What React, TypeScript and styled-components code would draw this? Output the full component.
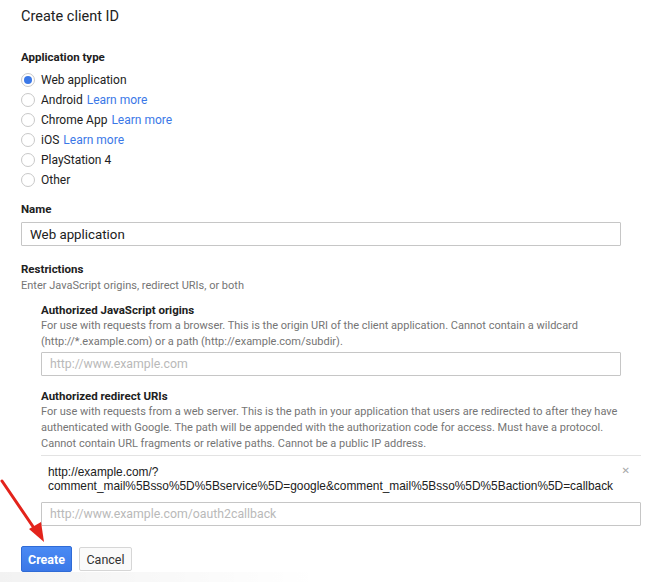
import React from "react";
import styled, { createGlobalStyle } from "styled-components";

const Global = createGlobalStyle`
  html, body { margin: 0; padding: 0; background: #fff; }
  body { font-family: Roboto, "Noto Sans", Arial, sans-serif; color: #212121; }
  * { box-sizing: border-box; }
`;

const Page = styled.div`
  position: relative;
  width: 659px;
  height: 582px;
  overflow: hidden;
  padding: 5px 0 0 21px;
`;

const Title = styled.h1`
  margin: 0;
  font-size: 14.5px;
  font-weight: 400;
  line-height: 24px;
  color: #212121;
`;

const Label = styled.div<{ $mt: number }>`
  margin-top: ${(p) => p.$mt}px;
  font-size: 11.5px;
  font-weight: 700;
  line-height: 15px;
  color: #212121;
`;

const RadioList = styled.div`
  margin-top: 5px;
  display: flex;
  flex-direction: column;
`;

const RadioRow = styled.label`
  display: flex;
  align-items: center;
  height: 20px;
  font-size: 12px;
  color: #212121;
`;

const Circle = styled.span<{ $on?: boolean }>`
  width: 14px;
  height: 14px;
  border-radius: 50%;
  border: 1px solid #c8c8c8;
  background: #fff;
  margin-right: 6px;
  display: flex;
  align-items: center;
  justify-content: center;
  &::after {
    content: "";
    width: 8px;
    height: 8px;
    border-radius: 50%;
    background: ${(p) => (p.$on ? "#3b78e7" : "transparent")};
  }
`;

const Link = styled.a`
  color: #3b78e7;
  text-decoration: none;
  margin-left: 4px;
`;

const Input = styled.div<{ $w: number; $ph?: boolean; $mt: number }>`
  width: ${(p) => p.$w}px;
  height: 24px;
  margin-top: ${(p) => p.$mt}px;
  border: 1px solid #c6c6c6;
  border-radius: 1px;
  padding-left: 8px;
  display: flex;
  align-items: center;
  font-size: ${(p) => (p.$ph ? 12.3 : 13.3)}px;
  color: ${(p) => (p.$ph ? "#b9b9b9" : "#212121")};
`;

const Hint = styled.div<{ $mt?: number }>`
  margin-top: ${(p) => p.$mt ?? 0}px;
  font-size: 11px;
  line-height: 16px;
  color: #757575;
`;

const Indent = styled.div`
  margin-left: 20px;
  width: 600px;
`;

const Divider = styled.div`
  margin-top: 3px;
  height: 1px;
  background: #e3e3e3;
`;

const UriRow = styled.div`
  position: relative;
  padding: 9px 28px 0 7px;
  font-family: "Liberation Sans", Arial, sans-serif;
  font-size: 11.9px;
  line-height: 14px;
  color: #212121;
  white-space: nowrap;
`;

const Remove = styled.span`
  position: absolute;
  right: 11px;
  top: 8px;
  font-family: "DejaVu Sans", sans-serif;
  font-size: 10px;
  line-height: 14px;
  color: #a8a8a8;
`;

const Buttons = styled.div`
  margin-top: 20px;
  display: flex;
  align-items: center;
  gap: 7px;
`;

const Button = styled.button<{ $primary?: boolean }>`
  height: ${(p) => (p.$primary ? 26 : 24)}px;
  width: ${(p) => (p.$primary ? 51 : 53)}px;
  padding: 0;
  border-radius: 2px;
  font-family: Roboto, Arial, sans-serif;
  font-size: 12.5px;
  font-weight: ${(p) => (p.$primary ? 700 : 400)};
  color: ${(p) => (p.$primary ? "#fff" : "#333")};
  border: 1px solid ${(p) => (p.$primary ? "#2f6bd6" : "#d6d6d6")};
  background: ${(p) =>
    p.$primary ? "linear-gradient(#4a8af4, #3b78e7)" : "#fafafa"};
`;

const BottomShade = styled.div`
  position: absolute;
  left: 0;
  bottom: 0;
  width: 320px;
  height: 10px;
  background: linear-gradient(to right, rgba(0,0,0,0.05), rgba(0,0,0,0));
`;

const Arrow = styled.svg`
  position: absolute;
  left: 0;
  top: 476px;
`;

export default function App() {
  const types = [
    { t: "Web application", on: true },
    { t: "Android", link: true },
    { t: "Chrome App", link: true },
    { t: "iOS", link: true },
    { t: "PlayStation 4" },
    { t: "Other" },
  ];
  return (
    <Page>
      <Global />
      <Title>Create client ID</Title>
      <Label $mt={21}>Application type</Label>
      <RadioList>
        {types.map((r) => (
          <RadioRow key={r.t}>
            <Circle $on={r.on} />
            {r.t}
            {r.link && <Link>Learn more</Link>}
          </RadioRow>
        ))}
      </RadioList>
      <Label $mt={12}>Name</Label>
      <Input $w={600} $mt={5}>Web application</Input>
      <Label $mt={16}>Restrictions</Label>
      <Hint $mt={1}>Enter JavaScript origins, redirect URIs, or both</Hint>
      <Indent>
        <Label $mt={9}>Authorized JavaScript origins</Label>
        <Hint>
          For use with requests from a browser. This is the origin URI of the
          client application. Cannot contain a wildcard
          <br />
          (http://*.example.com) or a path (http://example.com/subdir).
        </Hint>
        <Input $w={580} $ph $mt={2}>
          http://www.example.com
        </Input>
        <Label $mt={13}>Authorized redirect URIs</Label>
        <Hint>
          For use with requests from a web server. This is the path in your
          application that users are redirected to after they have
          <br />
          authenticated with Google. The path will be appended with the
          authorization code for access. Must have a protocol.
          <br />
          Cannot contain URL fragments or relative paths. Cannot be a public IP
          address.
        </Hint>
        <Divider />
        <UriRow>
          http://example.com/?
          <br />
          comment_mail%5Bsso%5D%5Bservice%5D=google&amp;comment_mail%5Bsso%5D%5Baction%5D=callback
          <Remove>✕</Remove>
        </UriRow>
        <Input $w={600} $ph $mt={9}>
          http://www.example.com/oauth2callback
        </Input>
      </Indent>
      <Buttons>
        <Button $primary>Create</Button>
        <Button>Cancel</Button>
      </Buttons>
      <BottomShade />
      <Arrow width="60" height="70" viewBox="0 0 60 70">
        <line x1="2" y1="5" x2="36" y2="55" stroke="#e3231b" strokeWidth="3" strokeLinecap="round" />
        <polygon points="44,66 29,53 41,46" fill="#e3231b" />
      </Arrow>
    </Page>
  );
}
